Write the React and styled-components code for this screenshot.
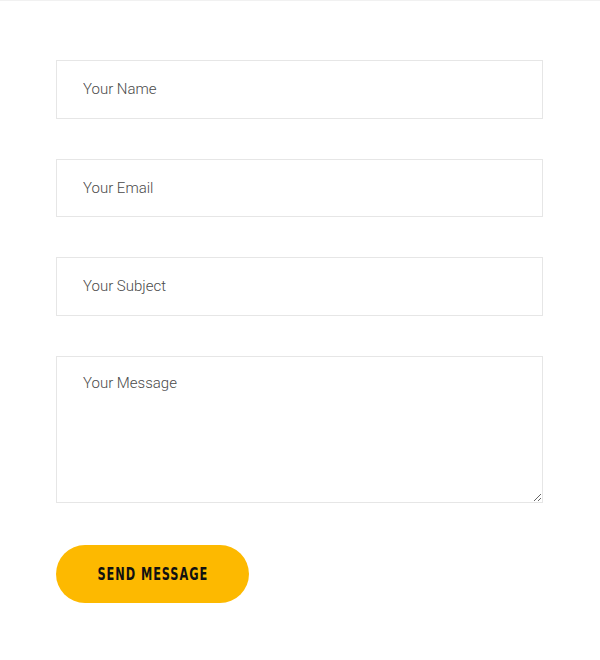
import React from "react";
import styled, { createGlobalStyle } from "styled-components";

const Global = createGlobalStyle`
  html, body { margin: 0; padding: 0; background: #fff; }
  body { font-family: Roboto, "Noto Sans", sans-serif; }
  * { box-sizing: border-box; }
`;

const Page = styled.div`
  width: 600px;
  min-height: 660px;
  border-top: 1px solid #f1f1f1;
  padding: 59px 57px 0 56px;
`;

const Form = styled.form`
  display: flex;
  flex-direction: column;
  gap: 40px;
`;

const fieldBase = `
  width: 100%;
  border: 1px solid #e6e6e6;
  background: #fff;
  font-family: Roboto, "Noto Sans", sans-serif;
  font-weight: 300;
  font-size: 15px;
  color: #333;
  padding: 0 26px;
  outline: none;
  &::placeholder { color: #4a4a4a; opacity: 1; }
`;

const Input = styled.input`
  ${fieldBase}
  height: 58.5px;
`;

const TextArea = styled.textarea`
  ${fieldBase}
  height: 147px;
  padding-top: 17px;
  resize: vertical;
  display: block;
`;

const Button = styled.button`
  align-self: flex-start;
  width: 193px;
  height: 58px;
  margin-top: 2.5px;
  border: none;
  border-radius: 29px;
  background: #fdb900;
  color: #111;
  display: flex;
  align-items: center;
  justify-content: center;
  cursor: pointer;
`;

const ButtonLabel = styled.span`
  display: inline-block;
  font-family: "DejaVu Sans Condensed", "DejaVu Sans", sans-serif;
  font-weight: 700;
  font-size: 17.5px;
  letter-spacing: 1.3px;
  text-transform: uppercase;
  white-space: nowrap;
  transform: scaleX(0.72);
  transform-origin: center;
`;

export default function App() {
  return (
    <>
      <Global />
      <Page>
        <Form onSubmit={(e) => e.preventDefault()}>
          <Input placeholder="Your Name" />
          <Input placeholder="Your Email" />
          <Input placeholder="Your Subject" />
          <TextArea placeholder="Your Message" />
          <Button type="submit">
            <ButtonLabel>Send Message</ButtonLabel>
          </Button>
        </Form>
      </Page>
    </>
  );
}
